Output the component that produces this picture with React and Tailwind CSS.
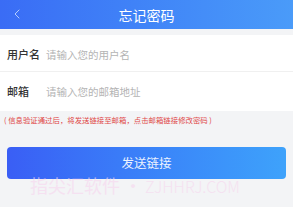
import { ChevronLeft } from 'lucide-react';

const cjk = { fontFamily: '"Noto Sans CJK SC", "Noto Sans", sans-serif' };

export default function App() {
  return (
    <div className="relative h-[207px] w-[293px] overflow-hidden bg-[#f3f4f6]" style={cjk}>
      <div className="relative flex h-[29px] items-center justify-center bg-gradient-to-r from-[#3a6cf5] to-[#4a9bf9]">
        <ChevronLeft className="absolute left-[9px] top-[6px] h-[16px] w-[16px] text-[#c8dcff]" strokeWidth={1.3} />
        <span className="text-[14px] leading-none text-white">忘记密码</span>
      </div>

      <div className="mt-[6px] bg-white">
        <div className="flex h-[37px] items-center border-b border-[#f0f0f0] px-[7px] pt-[3px]">
          <span className="w-[39px] shrink-0 text-[11px] font-medium text-[#333]">用户名</span>
          <span className="text-[10.5px] text-[#b4b4b4]">请输入您的用户名</span>
        </div>
        <div className="flex h-[39px] items-center px-[7px]">
          <span className="w-[39px] shrink-0 text-[11px] font-medium text-[#333]">邮箱</span>
          <span className="text-[10.5px] text-[#b4b4b4]">请输入您的邮箱地址</span>
        </div>
      </div>

      <p className="mt-[3px] whitespace-nowrap px-[4px] text-[7.4px] leading-[12px] text-[#e04848]">( 信息验证通过后，将发送链接至邮箱，点击邮箱链接修改密码 )</p>

      <div className="mx-[7px] mt-[21px] flex h-[32px] items-center justify-center rounded-[4px] bg-gradient-to-r from-[#3a5ef5] to-[#3ea2fb]">
        <span className="text-[12.5px] text-[#eaf2ff]">发送链接</span>
      </div>

      <div className="pointer-events-none absolute left-[30px] top-[176px] flex items-baseline whitespace-nowrap leading-none text-[#f7d6ee] opacity-60">
        <span className="text-[18px]">指尖汇软件 · </span>
        <span className="ml-[3px] text-[16px] font-light">ZJHHRJ.COM</span>
      </div>
    </div>
  );
}
